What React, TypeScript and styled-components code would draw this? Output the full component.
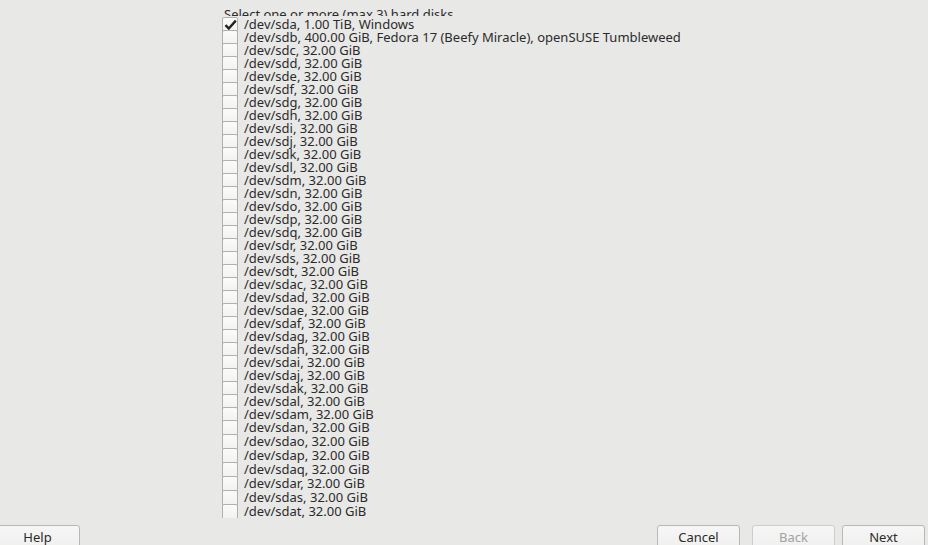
import React from "react";
import styled, { createGlobalStyle } from "styled-components";

const Global = createGlobalStyle`
  html, body { margin: 0; padding: 0; height: 545px; overflow: hidden; background: #e8e8e7; }
  #root { height: 545px; }
`;

const Page = styled.div`
  height: 545px;
  display: flex;
  flex-direction: column;
  background: #e8e8e7;
  font-family: "Noto Sans", "Open Sans", sans-serif;
  font-size: 13px;
  color: #2b2b2b;
  overflow: hidden;
`;

const Main = styled.div`
  height: 518px;
  flex-shrink: 0;
  overflow: hidden;
  padding-left: 222px;
  display: flex;
  flex-direction: column;
`;

const Heading = styled.div`
  height: 16px;
  overflow: hidden;
  padding-top: 7px;
  padding-left: 2px;
  box-sizing: border-box;
  line-height: 15px;
  flex-shrink: 0;
  white-space: nowrap;
`;

const DiskList = styled.div`
  display: flex;
  flex-direction: column;
  margin-top: 1px;
`;

const Row = styled.div<{ $tall?: boolean }>`
  height: ${(p) => (p.$tall ? 14 : 13)}px;
  display: flex;
  align-items: flex-start;
  flex-shrink: 0;
`;

const Box = styled.span`
  width: 16px;
  height: 16px;
  box-sizing: border-box;
  border: 1px solid #b0b0af;
  border-radius: 2px;
  background: linear-gradient(#fbfbfb, #f1f1f0);
  flex-shrink: 0;
  display: flex;
  align-items: center;
  justify-content: center;
`;

const Label = styled.span`
  margin-left: 6px;
  line-height: 13px;
  margin-top: 1px;
  white-space: nowrap;
`;

const Footer = styled.div`
  display: flex;
  align-items: flex-start;
  padding-top: 7px;
  padding-right: 3px;
  flex-shrink: 0;
`;

const Button = styled.button<{ $disabled?: boolean; $gap?: number }>`
  width: 83px;
  height: 30px;
  flex-shrink: 0;
  margin-left: ${(p) => p.$gap ?? 0}px;
  box-sizing: border-box;
  border: 1px solid ${(p) => (p.$disabled ? "#cdcdcc" : "#b8b8b7")};
  border-radius: 3px;
  background: linear-gradient(#f6f6f6, #eeeeed);
  font-family: "Noto Sans", "Open Sans", sans-serif;
  font-size: 13px;
  color: ${(p) => (p.$disabled ? "#a2a2a2" : "#2b2b2b")};
  padding: 4px 0 0;
  display: flex;
  justify-content: center;
  align-items: flex-start;
  line-height: 15px;
`;

const HelpButton = styled(Button)`
  width: 85px;
  margin-left: -5px;
`;

const Spacer = styled.div`
  flex: 1;
`;

const disks: string[] = [
  "/dev/sda, 1.00 TiB, Windows",
  "/dev/sdb, 400.00 GiB, Fedora 17 (Beefy Miracle), openSUSE Tumbleweed",
  ..."cdefghijklmnopqrst".split("").map((c) => `/dev/sd${c}, 32.00 GiB`),
  ..."cdefghijklmnopqrst".split("").map((c) => `/dev/sda${c}, 32.00 GiB`),
];

const Check = () => (
  <svg width="13" height="12" viewBox="0 0 13 12">
    <path d="M1.5 6.2 L4.8 9.6 L11.8 1.6" fill="none" stroke="#232323" strokeWidth="2.4" strokeLinecap="butt" strokeLinejoin="miter" />
  </svg>
);

export default function App() {
  return (
    <>
      <Global />
      <Page>
        <Main>
          <Heading>Select one or more (max 3) hard disks</Heading>
          <DiskList>
            {disks.map((d, i) => (
              <Row key={d} $tall={i >= 31}>
                <Box>{i === 0 && <Check />}</Box>
                <Label>{d}</Label>
              </Row>
            ))}
          </DiskList>
        </Main>
        <Footer>
          <HelpButton>Help</HelpButton>
          <Spacer />
          <Button>Cancel</Button>
          <Button $disabled $gap={12}>Back</Button>
          <Button $gap={7}>Next</Button>
        </Footer>
      </Page>
    </>
  );
}
